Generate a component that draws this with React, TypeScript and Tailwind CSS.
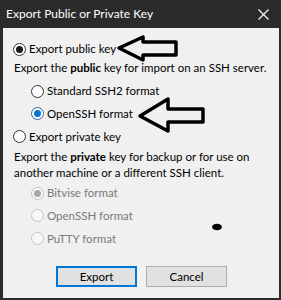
import React from "react";

type RadioKind = "checked" | "checkedBlue" | "unchecked" | "disabled" | "disabledChecked";

function Radio({ kind }: { kind: RadioKind }) {
  const disabled = kind === "disabled" || kind === "disabledChecked";
  const ring =
    kind === "checkedBlue"
      ? "border-[#2f64a0]"
      : disabled
      ? "border-[#c4c4c4]"
      : "border-[#333333]";
  const bg = disabled ? "bg-[#f7f7f7]" : "bg-white";
  return (
    <span
      className={`relative flex h-[13px] w-[13px] shrink-0 items-center justify-center rounded-full border ${ring} ${bg}`}
    >
      {kind === "checked" && <span className="h-[7px] w-[7px] rounded-full bg-[#1a1a1a]" />}
      {kind === "checkedBlue" && <span className="h-[7px] w-[7px] rounded-full bg-[#0078d7]" />}
      {kind === "disabledChecked" && <span className="h-[7px] w-[7px] rounded-full bg-[#a8a8a8]" />}
    </span>
  );
}

function RadioRow({
  kind,
  label,
  indent,
  h,
}: {
  kind: RadioKind;
  label: string;
  indent: boolean;
  h: string;
}) {
  const disabled = kind === "disabled" || kind === "disabledChecked";
  return (
    <div className={`flex items-center gap-[3px] whitespace-nowrap ${h} ${indent ? "pl-[28px]" : "pl-[10px]"}`}>
      <Radio kind={kind} />
      <span className={disabled ? "text-[#7a7a7a]" : "text-black"}>{label}</span>
    </div>
  );
}

export default function App() {
  return (
    <div
      className="relative flex h-[300px] w-[281px] flex-col bg-[#2b2b2b] pb-[2px] pl-[3px] pr-[2px] text-[11.5px] leading-none"
      style={{ fontFamily: 'Lato, "Noto Sans", sans-serif' }}
    >
      {/* Title bar */}
      <div className="flex h-[28px] shrink-0 items-center justify-between pl-[3px] pr-[10px] text-white">
        <span className="whitespace-nowrap text-[12px]">Export Public or Private Key</span>
        <svg width="11" height="11" viewBox="0 0 11 11" className="block">
          <path d="M0.5 0.5 L10.5 10.5 M10.5 0.5 L0.5 10.5" stroke="#ffffff" strokeWidth="1.1" />
        </svg>
      </div>

      {/* Client area */}
      <div className="relative flex flex-1 flex-col bg-[#f0f0f0] pt-[10px]">
        <RadioRow kind="checked" label="Export public key" indent={false} h="h-[22px]" />
        <div className="flex h-[16px] items-center whitespace-nowrap pl-[11px] text-black">
          <span>
            Export the <span className="font-bold">public</span> key for import on an SSH server.
          </span>
        </div>
        <div className="h-[4px]" />
        <RadioRow kind="unchecked" label="Standard SSH2 format" indent h="h-[22px]" />
        <RadioRow kind="checkedBlue" label="OpenSSH format" indent h="h-[23px]" />
        <RadioRow kind="unchecked" label="Export private key" indent={false} h="h-[23px]" />
        <div className="h-[1px]" />
        <div className="whitespace-nowrap pl-[11px] text-black leading-[16px]">
          <div>
            Export the <span className="font-bold">private</span> key for backup or for use on
          </div>
          <div>another machine or a different SSH client.</div>
        </div>
        <div className="h-[1px]" />
        <RadioRow kind="disabledChecked" label="Bitvise format" indent h="h-[22px]" />
        <RadioRow kind="disabled" label="OpenSSH format" indent h="h-[23px]" />
        <RadioRow kind="disabled" label="PuTTY format" indent h="h-[23px]" />
        <div className="h-[16px]" />
        <div className="flex justify-center gap-[9px] pl-[1px]">
          <button className="flex h-[21px] w-[81px] items-center justify-center border-2 border-[#0078d7] bg-[#e1e1e1] text-black">
            Export
          </button>
          <button className="flex h-[21px] w-[81px] items-center justify-center border border-[#adadad] bg-[#e1e1e1] text-black">
            Cancel
          </button>
        </div>
      </div>

      {/* Annotation arrows (overlay) */}
      <svg
        className="pointer-events-none absolute left-0 top-0"
        width="281"
        height="300"
        viewBox="0 0 281 300"
      >
        <polygon
          points="119,48 143,37 143,42 176,42 176,55 143,55 143,60"
          fill="none"
          stroke="#000"
          strokeWidth="3.5"
          strokeLinejoin="round"
        />
        <polygon
          points="140,116 168,99 168,109 203,109 203,122 168,122 168,131"
          fill="none"
          stroke="#000"
          strokeWidth="3.5"
          strokeLinejoin="round"
        />
        <ellipse cx="217" cy="227" rx="5" ry="3.2" fill="#000" />
      </svg>
    </div>
  );
}
